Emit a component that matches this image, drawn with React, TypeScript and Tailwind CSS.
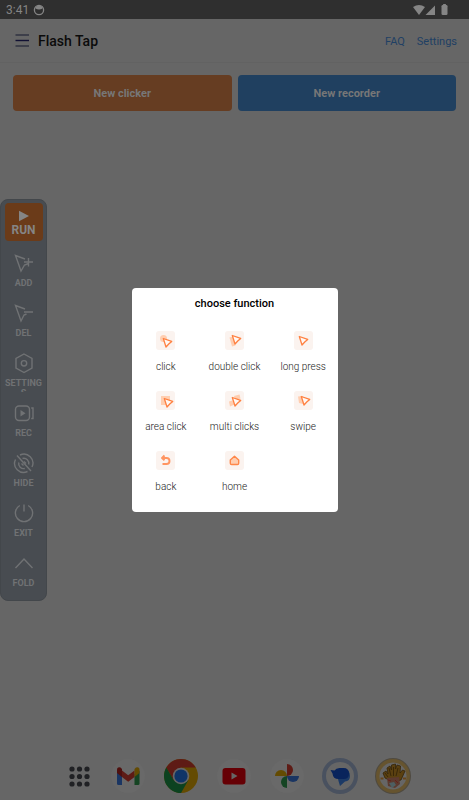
import React from "react";

const tools: { label: string; icon: React.ReactNode }[] = [
  { label: "ADD", icon: <path d="M12 6L2.500 2.500L8 18l3.500-6 4-1.500M15.500 5v8.500M11 9h9" /> },
  { label: "DEL", icon: <path d="M12 6L2.500 2.500L8 18l3-6 2.500-1M11 9h9" /> },
  { label: "SETTINGS", icon: <><path d="M11 1l8 4.500v9.500l-8 4.500-8-4.500V5.500z" /><circle cx="11" cy="10.300" r="2.700" /></> },
  { label: "REC", icon: <><rect x="2.500" y="3" width="14" height="14.500" rx="3.500" /><path d="M18.200 5h1.800v10.500h-1.800" /><path d="M7.500 7v6.500l5-3.250z" fill="currentColor" stroke="none" /></> },
  {
    label: "HIDE",
    icon: (
      <>
        <path d="M4 2.500L18 18M2.500 6.500a9 9 0 0 0 12 12M7 2a9 9 0 0 1 12 12" />
        <path d="M5.800 9.500a5 5 0 0 0 6 6M9.500 5.500a5 5 0 0 1 6.200 6M8.500 10.500l2 2M11 8.500l2 2" />
      </>
    ),
  },
  { label: "EXIT", icon: <path d="M11 1.500v7M6.800 2.500a8.600 8.600 0 1 0 8.400 0" /> },
  { label: "FOLD", icon: <path d="M2.500 15l8.500-9 8.500 9" /> },
];

const Cursor = ({ x = 0, y = 0 }: { x?: number; y?: number }) => (
  <path d="M5.300 5.500L13.700 8.400L11 10.800L8 14z" transform={`translate(${x} ${y})`} fill="#fff8f4" stroke="#ff8040" strokeWidth="1.300" strokeLinejoin="round" />
);

const functions: { label: string; icon: React.ReactNode }[] = [
  { label: "click", icon: <><circle cx="7.500" cy="7.500" r="3.500" fill="#ffceb0" /><Cursor x={2} y={2} /></> },
  { label: "double click", icon: <><path d="M4.500 6.500l4-1 2 9-3.500 1z" fill="#ffceb0" /><Cursor x={2} y={-1} /></> },
  { label: "long press", icon: <Cursor /> },
  { label: "area click", icon: <><rect x="5" y="5" width="9" height="9" fill="#ffceb0" /><Cursor x={3} y={2} /></> },
  { label: "multi clicks", icon: <><path d="M9 5l5.500-1.500 1 4-5 2zM4 10.500l3.500-1 2 4-4.500 2z" fill="#ffceb0" /><Cursor x={2} y={1} /></> },
  { label: "swipe", icon: <><path d="M4 5.500l5-.5v8l-4-1z" fill="#ffceb0" /><Cursor x={2} /></> },
  { label: "back", icon: <path d="M6 7h4.500a3 3 0 0 1 0 6H6.500M8.500 4.500L6 7l2.500 2.200" fill="none" stroke="#ff9460" strokeWidth="1.900" strokeLinejoin="round" /> },
  { label: "home", icon: <path d="M9.500 5.300L5.300 9v3.200q0 1.300 1.300 1.300h5.800q1.300 0 1.300-1.300V9z" fill="#ffceb0" stroke="#ff8749" strokeWidth="1.400" strokeLinejoin="round" /> },
];

const dots = [3, 10.500, 18];

const apps: { label: string; icon: React.ReactNode }[] = [
  {
    label: "Gmail",
    icon: (
      <>
        <circle cx="18" cy="18" r="17" fill="#696969" />
        <path d="M7 13v12.500q0 1.500 1.500 1.500H12V16z" fill="#1a3562" />
        <path d="M29.500 13v12.500q0 1.500-1.500 1.500h-3.500V16z" fill="#154423" />
        <path d="M12 12.500l6.200 4.700 6.300-4.700V19l-6.300 4.700L12 19z" fill="#5e1b15" />
        <path d="M7 12q0-3.500 3.500-2.500L12 11v8l-5-4z" fill="#4f100e" />
        <path d="M29.500 12q0-3.500-3.500-2.500L24.500 11v8l5-4z" fill="#644b02" />
      </>
    ),
  },
  {
    label: "Chrome",
    icon: (
      <>
        <circle cx="18" cy="18" r="17" fill="#644b02" />
        <path d="M3.300 9.500A17 17 0 0 1 32.700 9.500H18L10.700 22.200z" fill="#5e1b15" />
        <path d="M3.300 9.500A17 17 0 0 0 18 35l7.300-12.800L18 26l-7.300-3.800z" fill="#0c4220" />
        <circle cx="18" cy="18" r="8.300" fill="#666666" />
        <circle cx="18" cy="18" r="6.600" fill="#0f3467" />
      </>
    ),
  },
  {
    label: "YouTube",
    icon: (
      <>
        <circle cx="18" cy="18" r="17" fill="#696969" />
        <rect x="6.500" y="10" width="23" height="16.500" rx="3" fill="#660005" />
        <path d="M15.500 14.500v7l6-3.500z" fill="#666666" />
      </>
    ),
  },
  {
    label: "Photos",
    icon: (
      <>
        <circle cx="18" cy="18" r="17" fill="#696969" />
        <path d="M18 6a6 6 0 0 1 0 12z" fill="#5e1b15" />
        <path d="M30 18a6 6 0 0 1-12 0z" fill="#1a3562" />
        <path d="M18 30a6 6 0 0 1 0-12z" fill="#154423" />
        <path d="M6 18a6 6 0 0 1 12 0z" fill="#644b02" />
      </>
    ),
  },
  {
    label: "Messages",
    icon: (
      <>
        <circle cx="18" cy="18" r="18" fill="#49515f" />
        <circle cx="18" cy="18" r="14" fill="#666666" />
        <path d="M14 12h9q5 0 5 6 0 5-5 5.500L18 28l-1.500-5z" fill="#1c3a66" />
        <path d="M8.500 12l4 .500q1.500-2.500 5-2.500h4q5.500 0 5.500 5.500T21.500 21h-5q-5.500 0-6-5.500z" fill="#09245c" />
      </>
    ),
  },
  {
    label: "Cooking game",
    icon: (
      <>
        <circle cx="18" cy="18" r="18" fill="#4f4a40" />
        <circle cx="18" cy="18" r="17" fill="#66542f" />
        <circle cx="18" cy="18" r="13.500" fill="#666666" />
        <path d="M10 20l-2-5 3-2 2 3-1-6 3-2 1.500 4V7l4-1v5l1.500-4 3.500 1-.5 7 2.500-3 2.500 1-4 9-8 2z" fill="#5a4010" stroke="#352508" strokeWidth=".8" />
        <path d="M14 10l2 8M18.500 9v9M23 10l-2 8M10 15l3 4" stroke="#352508" strokeWidth=".9" fill="none" />
        <path d="M12 20l12-1 1 7-5 4-7-2z" fill="#5c3a2f" />
        <path d="M14 25l5-1 2 3-4 3z" fill="#4e5f62" />
        <path d="M13 22l3 1M20 22l3 3" stroke="#66201a" />
        <path d="M5.500 20.500h3M28 20.500h3" stroke="#66441a" strokeWidth="2" />
      </>
    ),
  },
];

export default function App() {
  return (
    <div className="relative flex min-h-screen flex-col bg-[#666666] font-['Roboto','Liberation_Sans',sans-serif]">
      <div className="flex h-[19px] items-center bg-[#2f2f2f] px-1.5 text-xs text-[#858585]">
        <span>3:41</span>
        <svg viewBox="0 0 12 12" className="ml-1 size-3">
          <circle cx="6" cy="6" r="4.600" fill="none" stroke="currentColor" strokeWidth="1.300" />
          <path d="M2.500 3q3.500-3 7 0v1.500q-3.500 2-7 0z" fill="currentColor" />
        </svg>
        <svg viewBox="0 0 38 12" className="mr-3 ml-auto h-3 w-[38px]" fill="currentColor">
          <path d="M0 3q6-4 12 0L6 11zM22 1.500v9.500h-9.500z" />
          <rect x="28.500" y="1" width="6" height="10" rx="1.300" />
          <rect x="30" y="0" width="3" height="3" rx=".5" />
        </svg>
      </div>
      <header className="flex h-11 items-center border-b border-[#626262] px-3">
        <button type="button" aria-label="Menu" className="ml-0.5 h-5 w-4">
          <svg viewBox="0 0 16 20" className="h-5 w-4" strokeWidth="1.400">
            <path d="M1.500 4h13.500M1.500 15h13.500" stroke="#303342" />
            <path d="M1.500 9.500h13.500" stroke="#111133" />
          </svg>
        </button>
        <h1 className="ml-2 text-sm font-medium text-[#0b0b0b]">Flash Tap</h1>
        <nav className="ml-auto flex gap-3 pt-[3px] text-[11px] text-[#1f4064]">
          <a href="#faq">FAQ</a>
          <a href="#settings">Settings</a>
        </nav>
      </header>
      <div className="grid grid-cols-2 gap-1.5 px-[13px] py-3 text-[11px] font-bold text-[#777777]">
        <button type="button" className="h-9 rounded bg-[#663d22] pt-0.5">New clicker</button>
        <button type="button" className="h-9 rounded bg-[#204060] pt-0.5">New recorder</button>
      </div>

      <aside className="absolute top-[199px] left-0 flex w-[47px] flex-col items-center rounded-lg border border-[#43474b] bg-[#484c51] pt-[3px] pb-px text-[#707274]">
        <button type="button" className="flex h-[38px] w-[38px] flex-col items-center rounded-sm bg-[#6b3b19] pt-[7px] text-xs leading-4 font-bold text-[#858585]">
          <svg viewBox="0 0 12 12" className="size-3 shrink-0" fill="currentColor"><path d="M1 .800l10 5.200L1 11.200z" /></svg>
          RUN
        </button>
        <div className="mt-2 flex flex-col">
          {tools.map(({ label, icon }) => (
            <button key={label} type="button" className="flex h-[50px] w-[45px] flex-col items-center pt-1 text-[9px] leading-[10px] font-bold">
              <svg viewBox="0 0 22 22" className="size-[22px] shrink-0" fill="none" stroke="currentColor" strokeWidth="1.400">{icon}</svg>
              <span className="mt-[3px] h-[14px] w-10 overflow-hidden break-all">{label}</span>
            </button>
          ))}
        </div>
      </aside>

      <section role="dialog" aria-labelledby="choose-title" className="absolute top-1/2 left-1/2 w-[206px] -translate-x-1/2 -translate-y-1/2 rounded bg-white pt-2 pb-1.5">
        <h2 id="choose-title" className="text-center text-[11px] leading-4 font-medium text-black">choose function</h2>
        <div className="mt-[14px] grid grid-cols-3">
          {functions.map(({ label, icon }) => (
            <button key={label} type="button" className="flex h-[60px] flex-col items-center pt-[5px] text-[10px] leading-3 font-light text-[#222222]">
              <svg viewBox="0 0 19 19" className="size-[19px] shrink-0"><rect width="19" height="19" rx="3" fill="#fbf3ef" />{icon}</svg>
              <span className="mt-[11px] whitespace-nowrap">{label}</span>
            </button>
          ))}
        </div>
      </section>

      <nav aria-label="Apps" className="mt-auto flex items-center justify-center gap-[17px] pb-1.5 pl-2">
        <button type="button" aria-label="All apps" className="flex h-9 w-[26px] items-center justify-center">
          <svg viewBox="0 0 21 21" className="size-[21px]" fill="#202124">
            {dots.map((y) => dots.map((x) => <circle key={`${x}-${y}`} cx={x} cy={y} r="2.600" />))}
          </svg>
        </button>
        {apps.map(({ label, icon }) => (
          <button key={label} type="button" aria-label={label} className="size-9">
            <svg viewBox="0 0 36 36" className="size-9">{icon}</svg>
          </button>
        ))}
      </nav>
    </div>
  );
}
